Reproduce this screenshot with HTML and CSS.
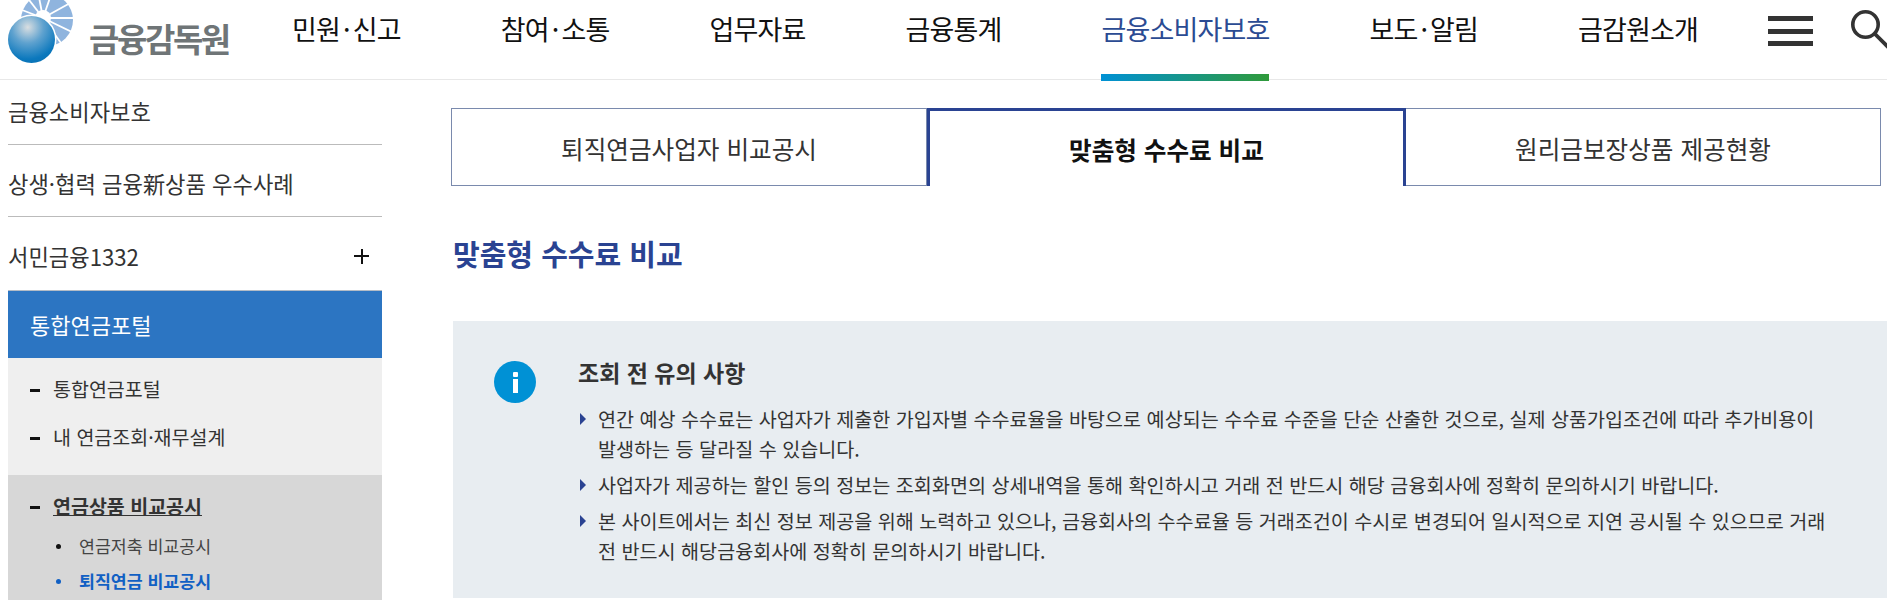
FILE: index.html
```html
<!DOCTYPE html>
<html lang="ko">
<head>
<meta charset="utf-8">
<title>맞춤형 수수료 비교</title>
<link rel="stylesheet" href="styles.css">
</head>
<body>
<header class="top">
  <a class="logo">
    <svg class="logo-mark" width="66" height="64" viewBox="0 0 66 64">
      <defs>
        <radialGradient id="ball" cx="0.42" cy="0.24" r="0.8">
          <stop offset="0" stop-color="#d9dee1"/>
          <stop offset="0.42" stop-color="#5fa2cf"/>
          <stop offset="0.85" stop-color="#0b78bd"/>
          <stop offset="1" stop-color="#0a72b5"/>
        </radialGradient>
      </defs>
      <circle cx="39" cy="20" r="26" fill="#8fb4de"/>
      <g stroke="#fff" stroke-width="1.8">
        <line x1="35" y1="18" x2="14" y2="10"/>
        <line x1="35" y1="18" x2="18" y2="-4"/>
        <line x1="35" y1="18" x2="30" y2="-8"/>
        <line x1="35" y1="18" x2="44" y2="-8"/>
        <line x1="35" y1="18" x2="64" y2="2"/>
        <line x1="35" y1="18" x2="70" y2="18"/>
        <line x1="35" y1="18" x2="68" y2="34"/>
        <line x1="35" y1="18" x2="58" y2="50"/>
      </g>
      <circle cx="35" cy="18" r="8" fill="#fff"/>
      <circle cx="23.5" cy="39.5" r="25" fill="#fff"/>
      <circle cx="23.5" cy="39.5" r="23.5" fill="url(#ball)"/>
    </svg>
    <span class="logo-text">금융감독원</span>
  </a>
  <nav class="gnb">
    <a class="gnb-item">민원<span class="dot">·</span>신고</a>
    <a class="gnb-item">참여<span class="dot">·</span>소통</a>
    <a class="gnb-item">업무자료</a>
    <a class="gnb-item">금융통계</a>
    <a class="gnb-item gnb-on">금융소비자보호</a>
    <a class="gnb-item">보도<span class="dot">·</span>알림</a>
    <a class="gnb-item">금감원소개</a>
  </nav>
  <div class="tools">
    <span class="burger"><i></i><i></i><i></i></span>
    <svg class="search" width="36" height="40" viewBox="0 0 36 40">
      <circle cx="14.5" cy="14.5" r="12.7" fill="none" stroke="#333" stroke-width="3.6"/>
      <line x1="23.5" y1="23.5" x2="38" y2="38" stroke="#333" stroke-width="3.8"/>
    </svg>
  </div>
</header>
<div class="wrap">
  <aside class="side">
    <a class="side-link">금융소비자보호</a>
    <a class="side-link">상생·협력 금융新상품 우수사례</a>
    <a class="side-link side-last">서민금융1332<span class="plus"></span></a>
    <a class="side-head">통합연금포털</a>
    <ul class="sub">
      <li class="sub-item">통합연금포털</li>
      <li class="sub-item">내 연금조회·재무설계</li>
    </ul>
    <div class="sub-open">
      <div class="sub-item sub-cur"><span>연금상품 비교공시</span></div>
      <ul class="third">
        <li>연금저축 비교공시</li>
        <li class="third-on">퇴직연금 비교공시</li>
      </ul>
    </div>
  </aside>
  <main class="main">
    <div class="tabs">
      <a class="tab">퇴직연금사업자 비교공시</a>
      <a class="tab tab-on">맞춤형 수수료 비교</a>
      <a class="tab">원리금보장상품 제공현황</a>
    </div>
    <h2 class="title">맞춤형 수수료 비교</h2>
    <section class="notice">
      <span class="info-icon"><i></i><b></b></span>
      <div class="notice-body">
        <h3 class="notice-title">조회 전 유의 사항</h3>
        <ul class="notice-list">
          <li>연간 예상 수수료는 사업자가 제출한 가입자별 수수료율을 바탕으로 예상되는 수수료 수준을 단순 산출한 것으로, 실제 상품가입조건에 따라 추가비용이 발생하는 등 달라질 수 있습니다.</li>
          <li>사업자가 제공하는 할인 등의 정보는 조회화면의 상세내역을 통해 확인하시고 거래 전 반드시 해당 금융회사에 정확히 문의하시기 바랍니다.</li>
          <li>본 사이트에서는 최신 정보 제공을 위해 노력하고 있으나, 금융회사의 수수료율 등 거래조건이 수시로 변경되어 일시적으로 지연 공시될 수 있으므로 거래 전 반드시 해당금융회사에 정확히 문의하시기 바랍니다.</li>
        </ul>
      </div>
    </section>
  </main>
</div>
</body>
</html>
```
FILE: styles.css
```css
* { box-sizing: border-box; }
html, body { margin: 0; padding: 0; height: 600px; overflow: hidden; background: #fff; }
body { font-family: "Noto Sans CJK KR", "Noto Sans", sans-serif; color: #333; }
ul { list-style: none; margin: 0; padding: 0; }
.top { display: flex; align-items: flex-start; height: 80px; border-bottom: 1px solid #e8e8e8; }
.logo { display: flex; width: 292px; flex: none; padding-left: 8px; }
.logo-mark { flex: none; }
.logo-text { font-size: 33px; font-weight: 700; color: #6f7577; letter-spacing: -2.4px; line-height: 40px; margin: 18px 0 0 15px; white-space: nowrap; }
.gnb { display: flex; flex: none; gap: 100px; height: 81px; }
.gnb-item { font-size: 27px; letter-spacing: -0.84px; color: #111; line-height: 58px; height: 81px; white-space: nowrap; }
.dot { margin: 0 3px; }
.gnb-on { color: #2b4b93; position: relative; }
.gnb-on::after { content: ""; position: absolute; left: 0; right: 0; bottom: 0; height: 7px; background: linear-gradient(90deg, #0091d5, #2f9a3a); }
.tools { display: flex; flex: none; align-items: flex-start; margin-left: auto; width: 119px; }
.burger { display: flex; flex-direction: column; justify-content: space-between; width: 45px; height: 30px; margin-top: 16px; flex: none; }
.burger i { display: block; height: 5px; background: #333; }
.search { margin: 10px 0 0 38px; flex: none; }
.wrap { display: flex; align-items: flex-start; }
.side { width: 374px; margin-left: 8px; flex: none; }
.side-link { display: flex; justify-content: space-between; align-items: center; height: 72px; padding-top: 5px; font-size: 22.2px; color: #333; border-bottom: 1px solid #bbb; }
.side-link:first-child { height: 65px; padding: 0 0 3px; }
.side-last { border-bottom: 0; height: 73px; }
.plus { width: 15px; height: 15px; margin-right: 13px; background: linear-gradient(#111, #111) center / 15px 2px no-repeat, linear-gradient(#111, #111) center / 2px 15px no-repeat; }
.side-head { display: flex; align-items: center; height: 68px; padding: 0 0 2px 22px; font-size: 22px; color: #fff; background: #2c75c2; border-top: 1px solid #b4bcc6; }
.sub { background: #efefef; padding: 8px 0 13px; }
.sub-item { position: relative; padding-left: 45px; height: 48px; line-height: 46px; font-size: 19.5px; color: #333; }
.sub-item::before { content: ""; position: absolute; left: 22px; top: 23px; width: 10px; height: 3px; background: #111; }
.sub-open { background: #d7d7d7; height: 130px; padding-top: 8px; }
.sub-cur { font-weight: 700; height: 46px; }
.sub-cur span { text-decoration: underline; }
.third li { position: relative; padding-left: 71px; height: 35px; line-height: 34px; font-size: 17.3px; color: #444; }
.third li::before { content: ""; position: absolute; left: 48px; top: 15px; width: 5px; height: 5px; border-radius: 50%; background: #111; }
.third .third-on { color: #1160c4; font-weight: 700; }
.third .third-on::before { background: #1160c4; }
.main { margin-left: 69px; width: 1436px; flex: none; }
.tabs { display: flex; margin-top: 28px; height: 78px; width: 1430px; }
.tab { flex: 0 0 475px; display: flex; align-items: center; justify-content: center; padding-top: 1px; font-size: 24.6px; color: #333; border: 1px solid #7a8aad; border-left: 0; }
.tab:first-child { flex-basis: 476px; border-left: 1px solid #7a8aad; }
.tab-on { flex-basis: 479px; font-weight: 700; color: #111; border: 3px solid #2a4392; border-bottom: 0; }
.title { margin: 47px 0 0 2px; font-size: 29px; line-height: 40px; font-weight: 700; color: #2a4392; }
.notice { display: flex; margin: 48px 0 0 2px; background: #e8edf1; height: 277px; padding: 36px 0 0 41px; }
.info-icon { position: relative; width: 42px; height: 42px; margin-top: 4px; border-radius: 50%; background: #0091d5; flex: none; }
.info-icon i { position: absolute; left: 19px; top: 11px; width: 5px; height: 5px; background: #fff; border-radius: 1px; }
.info-icon b { position: absolute; left: 19px; top: 18px; width: 5px; height: 14px; background: #fff; }
.notice-body { margin-left: 42px; width: 1260px; }
.notice-title { margin: 0; font-size: 23px; line-height: 30px; font-weight: 700; color: #333; }
.notice-list { margin-top: 17px; }
.notice-list li { position: relative; padding-left: 20px; font-size: 19.6px; line-height: 30px; margin-bottom: 6px; color: #333; word-break: keep-all; }
.notice-list li::before { content: ""; position: absolute; left: 2px; top: 9px; border-left: 6px solid #2a4392; border-top: 6px solid transparent; border-bottom: 6px solid transparent; }
```
